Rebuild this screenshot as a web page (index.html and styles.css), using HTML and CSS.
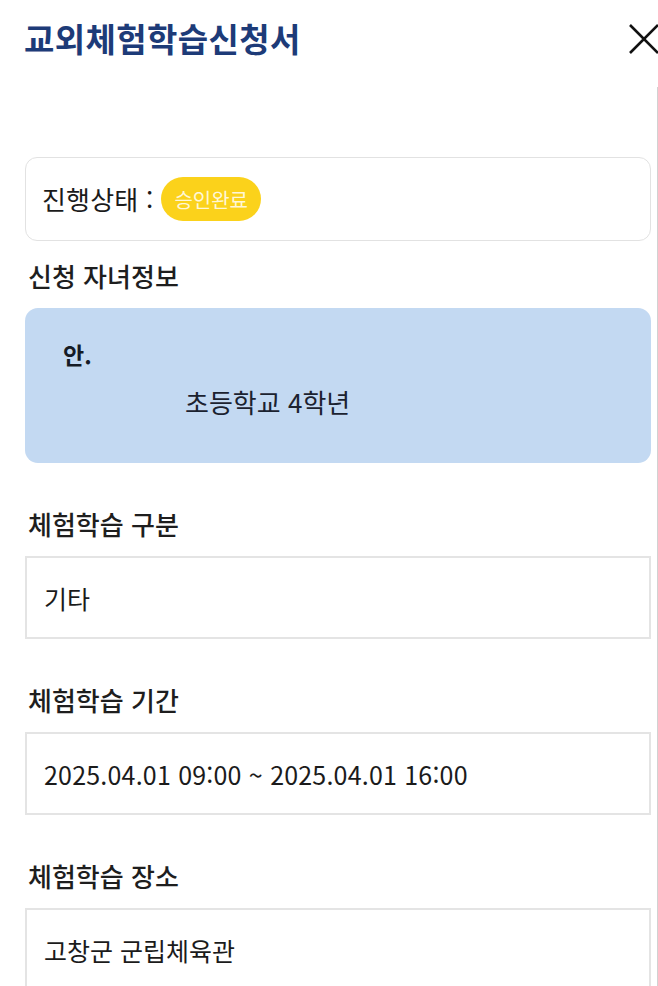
FILE: index.html
```html
<!DOCTYPE html>
<html lang="ko">
<head>
<meta charset="utf-8">
<title>교외체험학습신청서</title>
<link rel="stylesheet" href="styles.css">
</head>
<body>
<header class="header">
  <h1 class="title">교외체험학습신청서</h1>
  <button class="close" aria-label="닫기">
    <svg width="32" height="32" viewBox="0 0 32 32"><path d="M2 2 L30 30 M30 2 L2 30" stroke="#111" stroke-width="2.6" fill="none"/></svg>
  </button>
</header>
<main class="content">
  <div class="status-card">
    <span class="status-label">진행상태 :</span>
    <span class="badge">승인완료</span>
  </div>

  <section class="child-section">
    <h2 class="section-label">신청 자녀정보</h2>
    <div class="child-card">
      <div class="child-name">안.</div>
      <div class="child-school">초등학교 4학년</div>
    </div>
  </section>

  <section class="field">
    <h2 class="section-label">체험학습 구분</h2>
    <div class="field-box">기타</div>
  </section>

  <section class="field">
    <h2 class="section-label">체험학습 기간</h2>
    <div class="field-box date">2025.04.01 09:00 ~ 2025.04.01 16:00</div>
  </section>

  <section class="field">
    <h2 class="section-label">체험학습 장소</h2>
    <div class="field-box">고창군 군립체육관</div>
  </section>
</main>
</body>
</html>
```

FILE: styles.css
```css
* { box-sizing: border-box; }
html, body { margin: 0; padding: 0; background: #fff; }
body {
  font-family: "Noto Sans CJK KR", "Noto Sans", sans-serif;
  color: #1b1b1b;
  width: 658px;
  overflow: hidden;
}
.header {
  height: 87px;
  padding: 18px 0 0 24px;
  display: flex;
  justify-content: space-between;
  align-items: flex-start;
}
.title {
  margin: 0;
  font-size: 33px;
  line-height: 40px;
  font-weight: 700;
  letter-spacing: 0.4px;
  color: #1d3b78;
}
.close {
  margin: 5px -2px 0 0;
  padding: 0;
  border: 0;
  background: none;
  width: 32px;
  height: 32px;
}
.close svg { display: block; }
.content {
  padding: 70px 6px 0 25px;
  border-right: 1px solid #d2d2d2;
  min-height: 899px;
}
.status-card {
  height: 84px;
  border: 1px solid #e2e2e2;
  border-radius: 12px;
  display: flex;
  align-items: center;
  padding: 0 16px;
}
.status-label {
  font-size: 26px;
  line-height: 30px;
  letter-spacing: 0.2px;
}
.badge {
  margin-left: 8px;
  height: 44px;
  padding: 0 13px;
  border-radius: 22px;
  background: #fbd21b;
  color: #fff7d6;
  font-size: 20px;
  display: flex;
  align-items: center;
}
.section-label {
  margin: 0 0 17px 3px;
  font-size: 26px;
  line-height: 30px;
  font-weight: 500;
  color: #1e1e1e;
}
.child-section { margin-top: 20px; }
.child-card {
  height: 155px;
  background: #c3d9f2;
  border-radius: 13px;
  padding: 31px 0 0 38px;
}
.child-name {
  font-size: 23px;
  line-height: 30px;
  font-weight: 700;
  color: #151b26;
}
.child-school {
  margin: 18px 0 0 122px;
  font-size: 26px;
  line-height: 30px;
  color: #1b2230;
}
.field { margin-top: 46px; }
.field-box {
  height: 83px;
  border: 2px solid #e4e4e4;
  padding: 0 17px;
  display: flex;
  align-items: center;
  font-size: 25px;
  line-height: 30px;
  color: #1b1b1b;
}
.field-box.date { letter-spacing: 0.2px; }
```
